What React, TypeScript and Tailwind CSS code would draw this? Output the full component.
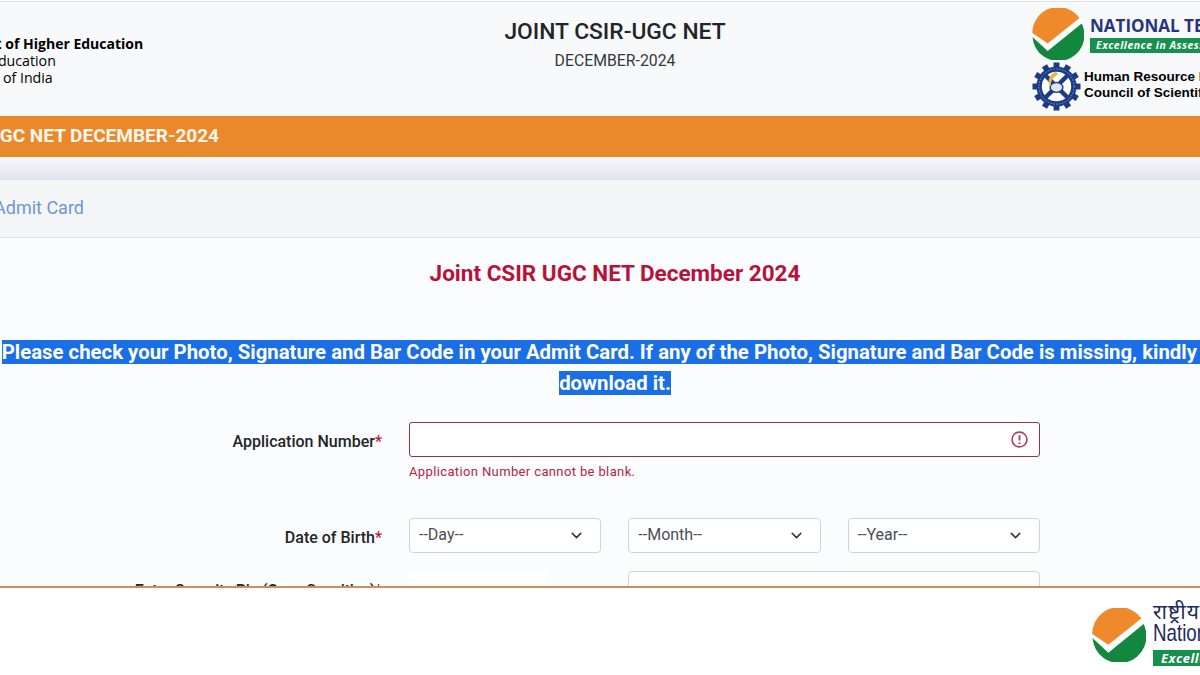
import * as React from 'react';
import { ChevronDown } from 'lucide-react';

const NtaMark = ({ className }: { className: string }) => (
  <svg viewBox="0 0 52 52" className={className}>
    <circle cx="26" cy="26" r="26" fill="#fff" />
    <path d="M0.3 25 L15.7 35.5 L47.5 10 A26 26 0 0 0 0.3 25 Z" fill="#ee8a2c" />
    <path d="M0.5 29 L15.7 43 L49.7 15.5 A26 26 0 1 1 0.5 29 Z" fill="#14873f" />
  </svg>
);

const CsirMark = () => (
  <svg viewBox="0 0 50 50" className="h-[49px] w-[49px] shrink-0">
    <g fill="#1c3a86">
      {[0, 30, 60, 90, 120, 150, 180, 210, 240, 270, 300, 330].map((a) => (
        <rect key={a} x="22" y="0.5" width="6" height="7" transform={`rotate(${a} 25 25)`} />
      ))}
    </g>
    <circle cx="25" cy="25" r="20.5" fill="#1c3a86" />
    <circle cx="25" cy="25" r="18" fill="none" stroke="#9db2d8" strokeWidth="0.8" strokeDasharray="1.5 1.5" />
    <circle cx="25" cy="25" r="15" fill="#fff" />
    <path d="M14 14 L36 36 M36 14 L14 36" stroke="#1c3a86" strokeWidth="4.5" />
    <ellipse cx="25" cy="26" rx="6.5" ry="5" fill="#dfe5f0" stroke="#1c3a86" strokeWidth="1.5" />
    <path d="M24 10 C17 14 15 20 19 25 C19 19 22 15 27 12 Z" fill="#e3b53c" />
  </svg>
);

const Select = ({ label }: { label: string }) => (
  <div className="flex h-[35px] flex-1 items-center justify-between rounded border border-[#ced4da] bg-white pl-[9px] pr-[15px] text-[16px] text-[#495057]">
    <span className="-mt-[1px]">{label}</span>
    <ChevronDown className="h-[17px] w-[17px] text-[#343a40]" strokeWidth={2.2} />
  </div>
);

const Label = ({ text, className = '' }: { text: string; className?: string }) => (
  <div className={`w-[417px] shrink-0 pt-[8px] text-right text-[16px] font-medium text-[#212529] ${className}`}>
    {text}
    <span className="text-[#c4122f]">*</span>
  </div>
);

export default function App() {
  return (
    <div className="flex h-[675px] w-[1200px] flex-col overflow-hidden bg-white font-['Roboto',sans-serif]">
      {/* Header */}
      <header className="relative mt-[1px] h-[115px] shrink-0 border-t border-[#e3e5e8] bg-[#f8f9fa]">
        <div className="-ml-[84px] pt-[33px] font-['Open_Sans',sans-serif] text-[14.2px] leading-[17px] text-black">
          <div className="text-[14px] font-bold">Department of Higher Education</div>
          <div>Ministry of Education</div>
          <div>Government of India</div>
        </div>
        <div className="absolute left-[315px] top-[17px] w-[600px] text-center">
          <div className="text-[22.8px] font-medium leading-[26px] text-[#212529]">JOINT CSIR-UGC NET</div>
          <div className="mt-[7px] text-[15.8px] leading-[18px] text-[#343a40]">DECEMBER-2024</div>
        </div>
        <div className="absolute left-[1032px] top-[6px] w-[300px]">
          <div className="flex items-start gap-[6px]">
            <NtaMark className="h-[52px] w-[52px] shrink-0" />
            <div className="pt-[8px]">
              <div className="whitespace-nowrap font-['Open_Sans',sans-serif] text-[17px] font-bold leading-[20px] text-[#27357e]">
                NATIONAL TESTING AGENCY
              </div>
              <div className="mt-[2px] whitespace-nowrap bg-[#16904c] pl-[6px] font-['Open_Sans',sans-serif] text-[10.5px] font-bold italic leading-[15px] tracking-[0.5px] text-white">
                Excellence in Assessment
              </div>
            </div>
          </div>
          <div className="mt-[2px] flex items-center gap-[3px]">
            <CsirMark />
            <div className="-mt-[3px] whitespace-nowrap font-['Liberation_Sans',sans-serif] text-[13.5px] font-bold leading-[16px] text-black">
              <div>Human Resource Development Group</div>
              <div>Council of Scientific &amp; Industrial Research</div>
            </div>
          </div>
        </div>
      </header>

      {/* Orange bar */}
      <div className="flex h-[41px] shrink-0 items-center bg-[#e9892c]">
        <div className="-mt-[1px] flex w-[219px] justify-end whitespace-nowrap text-[19px] font-bold text-[#fdf6ea]">
          Joint CSIR-UGC NET DECEMBER-2024
        </div>
      </div>

      {/* Strip under the bar */}
      <div className="h-[22px] shrink-0 bg-gradient-to-b from-[#f6f7fa] to-[#e1e5ef]" />

      {/* Breadcrumb */}
      <div className="flex h-[59px] shrink-0 items-center border-y border-y-[#dfe1e5] bg-[#f4f5f7]">
        <div className="-mt-[2px] flex w-[84px] justify-end whitespace-nowrap text-[18px] text-[#6f97d2]">
          Download Admit Card
        </div>
      </div>

      {/* Form */}
      <main className="-ml-[35px] h-[348px] w-[1300px] shrink-0 overflow-hidden bg-[#fbfcfe]">
        <h1 className="pt-[21px] text-center text-[22.5px] font-bold leading-[28px] text-[#b8123b]">
          Joint CSIR UGC NET December 2024
        </h1>
        <p className="mx-auto mt-[50px] w-[1232px] text-center text-[20.35px] font-bold leading-[30.5px] text-white">
          <span className="bg-[#1a6fe6]">
            Please check your Photo, Signature and Bar Code in your Admit Card. If any of the Photo, Signature and Bar Code is missing, kindly re-download it.
          </span>
        </p>

        <div className="mt-[24px] flex gap-[27px]">
          <Label text="Application Number" />
          <div className="w-[631px]">
            <div className="flex h-[35px] items-center justify-end rounded-[3px] border border-[#8a3a46] bg-white pr-[11px]">
              <svg viewBox="0 0 16 16" className="h-[17px] w-[17px]" fill="none">
                <circle cx="8" cy="8" r="7" stroke="#a8485a" strokeWidth="1.6" />
                <path d="M8 4 V9" stroke="#a8485a" strokeWidth="1.8" />
                <circle cx="8" cy="11.5" r="1" fill="#a8485a" />
              </svg>
            </div>
            <div className="mt-[7px] text-[13px] leading-[16px] tracking-[0.37px] text-[#b0273f]">
              Application Number cannot be blank.
            </div>
          </div>
        </div>

        <div className="mt-[38px] flex gap-[27px]">
          <Label text="Date of Birth" className="pt-[7px]" />
          <div className="flex w-[631px] gap-[27px]">
            <Select label="--Day--" />
            <Select label="--Month--" />
            <Select label="--Year--" />
          </div>
        </div>

        <div className="mt-[18px] flex gap-[27px]">
          <Label text="Enter Security Pin (Case Sensitive)" className="tracking-[-0.2px]" />
          <div className="flex w-[631px] gap-[83px]">
            <div className="h-[35px] w-[136px] bg-white" />
            <div className="h-[35px] flex-1 rounded border border-[#ced4da] bg-white" />
          </div>
        </div>
      </main>

      {/* Footer */}
      <footer className="relative flex-1 border-t-2 border-[#c9925a] bg-white">
        <div className="absolute left-[1092px] top-[20px] flex w-[200px] gap-[7px]">
          <NtaMark className="h-[54px] w-[54px] shrink-0" />
          <div className="whitespace-nowrap">
            <div className="-mt-[9px] font-['Noto_Sans',sans-serif] text-[21px] leading-[24px] tracking-[1px] text-[#1f2a5c]">राष्ट्रीय</div>
            <div className="origin-left scale-x-[0.78] font-['Liberation_Sans',sans-serif] text-[24px] leading-[20px] text-[#1f2a5c]">National</div>
            <div className="mt-[7px] bg-[#16904c] pl-[8px] font-['Open_Sans',sans-serif] text-[13px] font-bold italic leading-[16px] tracking-[0.5px] text-white">
              Excellence
            </div>
          </div>
        </div>
      </footer>
    </div>
  );
}
